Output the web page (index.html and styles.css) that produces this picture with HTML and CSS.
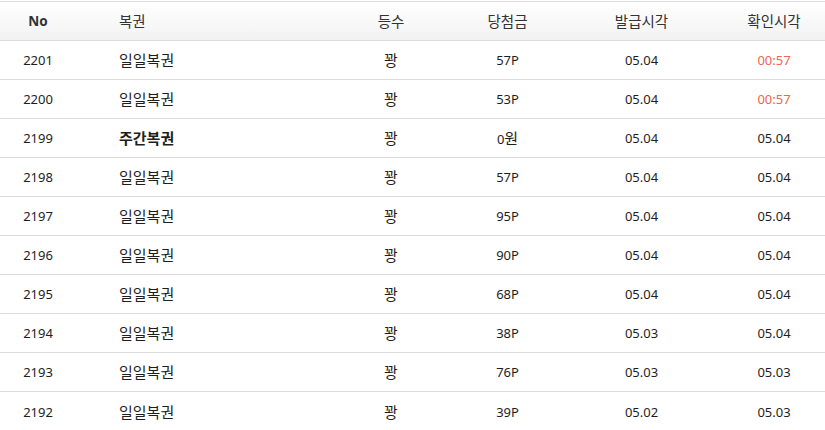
FILE: index.html
```html
<!DOCTYPE html>
<html lang="ko">
<head>
<meta charset="utf-8">
<title>복권 내역</title>
<link rel="stylesheet" href="styles.css">
</head>
<body>
<div class="table">
  <div class="row head">
    <div class="c no strong">No</div>
    <div class="c name ko">복권</div>
    <div class="c ko">등수</div>
    <div class="c ko">당첨금</div>
    <div class="c ko">발급시각</div>
    <div class="c ko">확인시각</div>
  </div>
  <div class="row"><div class="c no">2201</div><div class="c name ko">일일복권</div><div class="c ko">꽝</div><div class="c">57P</div><div class="c">05.04</div><div class="c red">00:57</div></div>
  <div class="row"><div class="c no">2200</div><div class="c name ko">일일복권</div><div class="c ko">꽝</div><div class="c">53P</div><div class="c">05.04</div><div class="c red">00:57</div></div>
  <div class="row"><div class="c no">2199</div><div class="c name ko strong">주간복권</div><div class="c ko">꽝</div><div class="c">0<span class="ko">원</span></div><div class="c">05.04</div><div class="c">05.04</div></div>
  <div class="row"><div class="c no">2198</div><div class="c name ko">일일복권</div><div class="c ko">꽝</div><div class="c">57P</div><div class="c">05.04</div><div class="c">05.04</div></div>
  <div class="row"><div class="c no">2197</div><div class="c name ko">일일복권</div><div class="c ko">꽝</div><div class="c">95P</div><div class="c">05.04</div><div class="c">05.04</div></div>
  <div class="row"><div class="c no">2196</div><div class="c name ko">일일복권</div><div class="c ko">꽝</div><div class="c">90P</div><div class="c">05.04</div><div class="c">05.04</div></div>
  <div class="row"><div class="c no">2195</div><div class="c name ko">일일복권</div><div class="c ko">꽝</div><div class="c">68P</div><div class="c">05.04</div><div class="c">05.04</div></div>
  <div class="row"><div class="c no">2194</div><div class="c name ko">일일복권</div><div class="c ko">꽝</div><div class="c">38P</div><div class="c">05.03</div><div class="c">05.04</div></div>
  <div class="row"><div class="c no">2193</div><div class="c name ko">일일복권</div><div class="c ko">꽝</div><div class="c">76P</div><div class="c">05.03</div><div class="c">05.03</div></div>
  <div class="row last"><div class="c no">2192</div><div class="c name ko">일일복권</div><div class="c ko">꽝</div><div class="c">39P</div><div class="c">05.02</div><div class="c">05.03</div></div>
</div>
</body>
</html>
```
FILE: styles.css
```css
html, body {
  margin: 0;
  padding: 0;
  background: #fff;
}
body {
  font-family: "Noto Sans", "Noto Sans CJK KR", sans-serif;
  font-size: 13px;
  color: #1e1e1e;
  padding-top: 1px;
}
.table {
  width: 825px;
  border-top: 1px solid #dcdcdc;
}
.row {
  display: grid;
  grid-template-columns: 76px 251px 128px 105px 163px 102px;
  height: 39px;
  align-items: center;
  border-bottom: 1px solid #dcdcdc;
  box-sizing: border-box;
}
.row.head {
  background: linear-gradient(#ffffff, #f2f2f2);
  color: #333;
  font-size: 13.5px;
}
.row.last {
  border-bottom: none;
}
.c {
  text-align: center;
  line-height: 20px;
  white-space: nowrap;
}
.ko {
  font-size: 15px;
}
.head .ko {
  font-size: 14.5px;
}
.c.name {
  text-align: left;
  padding-left: 43px;
}
.strong {
  font-weight: 700;
}
.red {
  color: #ef6550;
}
```
